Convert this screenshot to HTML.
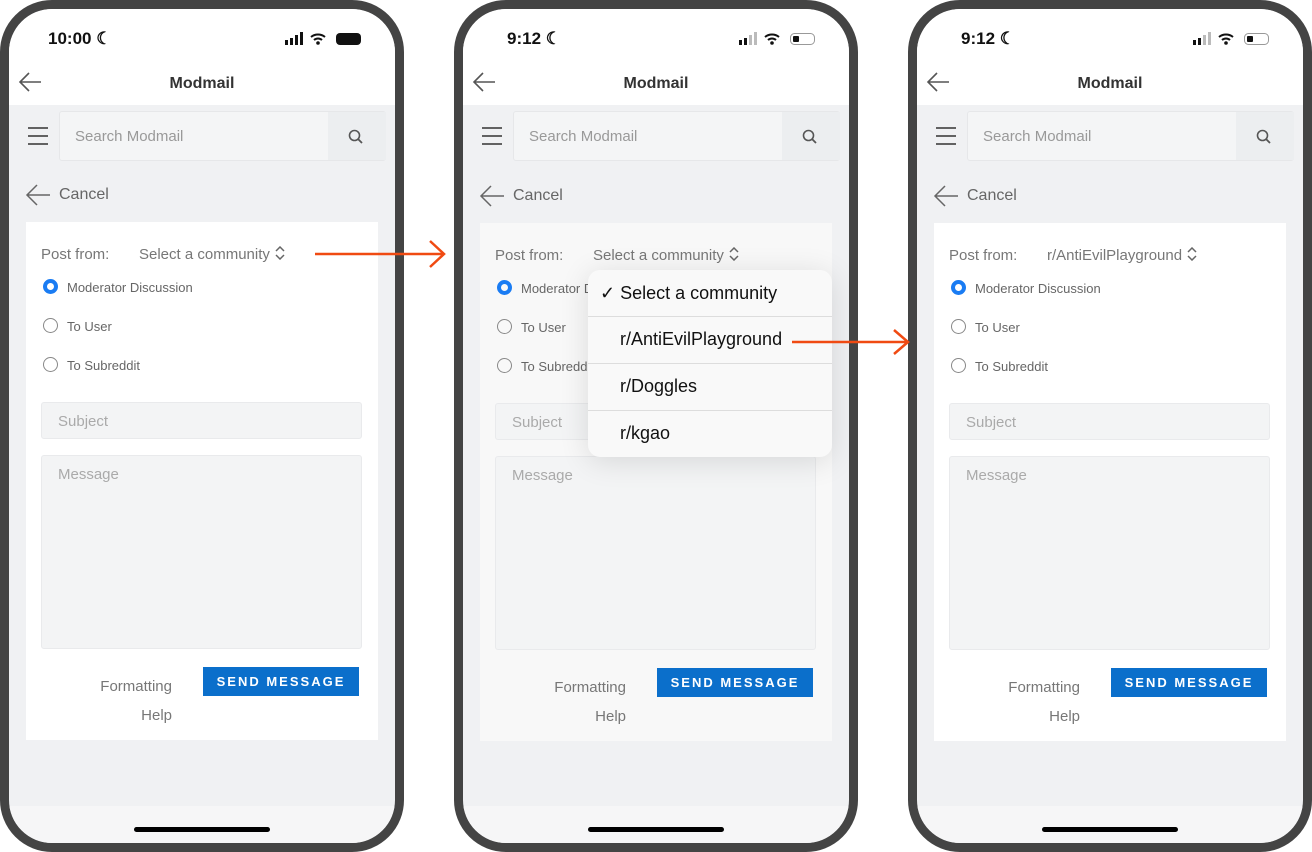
<!DOCTYPE html>
<html><head><meta charset="utf-8"><style>
*{margin:0;padding:0;box-sizing:border-box}
body{width:1312px;height:852px;background:#fff;position:relative;overflow:hidden;font-family:"Liberation Sans",sans-serif}
.ph{position:absolute;top:0;width:404px;height:852px;border:9px solid #444;border-radius:52px;background:#f0f1f3;overflow:hidden}
.a{position:absolute}
.top{left:0;top:0;width:386px;height:96px;background:#fff}
.time{top:20px;font-size:17px;font-weight:bold;color:#111}
.title{left:0;width:386px;top:66px;text-align:center;font-size:16px;font-weight:bold;color:#333}
.search{left:50px;top:102px;width:327px;height:50px;background:#f4f5f6;border:1px solid #e6e7e9;border-radius:3px}
.sbtn{left:268px;top:0;width:58px;height:48px;background:#eceef0}
.card{left:17px;width:352px;height:518px;background:#fff}
.lbl{font-size:15px;color:#777}
.rad{width:15px;height:15px;border-radius:50%;border:1.5px solid #888}
.rad.on{border:4px solid #1a7cf3}
.rt{font-size:13px;color:#666}
.inp{left:15px;width:321px;background:#f3f4f5;border:1px solid #e9eaec;border-radius:3px;font-size:15px;color:#aaa;padding:10px 16px}
.btn{width:156px;height:29px;background:#0b6fcb;color:#fff;font-size:13px;font-weight:bold;letter-spacing:2px;text-align:center;line-height:29px}
.bot{left:0;top:797px;width:386px;height:50px;background:#f6f6f7}
.home{left:125px;top:818px;width:136px;height:5px;border-radius:3px;background:#000}
.fh{left:20px;top:450px;width:126px;text-align:right;line-height:29px}
.fh span{display:block}
.fh .h{padding-right:0}
.chev{display:inline-block;vertical-align:-1px;margin-left:4px}
</style></head><body>

<div class="ph" style="left:0">
 <div class="a top"></div>
 <div class="a time" style="left:39px">10:00 ☾</div>
 <svg class="a" style="left:275px;top:23px" width="80" height="14"><rect x="1" y="8" width="3" height="5" fill="#111"/><rect x="6" y="6" width="3" height="7" fill="#111"/><rect x="11" y="3" width="3" height="10" fill="#111"/><rect x="16" y="0" width="3" height="13" fill="#111"/><path d="M27 5a11 11 0 0 1 14 0M30 8a6 6 0 0 1 8 0" stroke="#111" stroke-width="2" fill="none"/><circle cx="34" cy="11" r="1.8" fill="#111"/><rect x="52" y="1" width="25" height="12" rx="4" fill="#111"/></svg>
 <svg class="a" style="left:8px;top:62px" width="26" height="22"><path d="M24 11H3M12 2 3 11l9 9" stroke="#555" stroke-width="1.6" fill="none"/></svg>
 <div class="a title">Modmail</div>
 <svg class="a" style="left:19px;top:118px" width="22" height="18"><path d="M0 1h20M0 9h20M0 17h20" stroke="#333" stroke-width="1.6"/></svg>
 <div class="a search"><span class="a" style="left:15px;top:16px;font-size:15px;color:#999">Search Modmail</span><div class="a sbtn"><svg class="a" style="left:20px;top:17px" width="16" height="16"><circle cx="6.5" cy="6.5" r="5" stroke="#555" stroke-width="1.6" fill="none"/><path d="M10 10l4 4" stroke="#555" stroke-width="1.8"/></svg></div></div>
 <svg class="a" style="left:16px;top:174px" width="26" height="24"><path d="M25 12H2M12 2 2 12l10 10" stroke="#666" stroke-width="1.5" fill="none"/></svg>
 <div class="a lbl" style="left:50px;top:177px;font-size:16px;color:#666">Cancel</div>
 <div class="a card" style="top:213px">
  <div class="a lbl" style="left:15px;top:24px">Post from:</div>
  <div class="a lbl" style="left:113px;top:24px">Select a community<svg class="chev" width="12" height="14"><path d="M2 5l4-4 4 4M2 9l4 4 4-4" stroke="#666" stroke-width="1.5" fill="none"/></svg></div>
  <div class="a rad on" style="left:17px;top:57px"></div><div class="a rt" style="left:41px;top:58px">Moderator Discussion</div>
  <div class="a rad" style="left:17px;top:96px"></div><div class="a rt" style="left:41px;top:97px">To User</div>
  <div class="a rad" style="left:17px;top:135px"></div><div class="a rt" style="left:41px;top:136px">To Subreddit</div>
  <div class="a inp" style="top:180px;height:37px">Subject</div>
  <div class="a inp" style="top:233px;height:194px">Message</div>
  <div class="a lbl fh">Formatting<br>Help</div>
  <div class="a btn" style="left:177px;top:445px">SEND MESSAGE</div>
 </div>
 <div class="a bot"></div><div class="a home"></div>
</div>

<div class="ph" style="left:454px">
 <div class="a top"></div>
 <div class="a time" style="left:44px">9:12 ☾</div>
 <svg class="a" style="left:275px;top:23px" width="80" height="14"><rect x="1" y="8" width="3" height="5" fill="#111"/><rect x="6" y="6" width="3" height="7" fill="#111"/><rect x="11" y="3" width="3" height="10" fill="#bbb"/><rect x="16" y="0" width="3" height="13" fill="#bbb"/><path d="M27 5a11 11 0 0 1 14 0M30 8a6 6 0 0 1 8 0" stroke="#111" stroke-width="2" fill="none"/><circle cx="34" cy="11" r="1.8" fill="#111"/><rect x="52.5" y="1.5" width="24" height="11" rx="4" fill="none" stroke="#999"/><rect x="55" y="4" width="6" height="6" rx="1" fill="#111"/></svg>
 <svg class="a" style="left:8px;top:62px" width="26" height="22"><path d="M24 11H3M12 2 3 11l9 9" stroke="#555" stroke-width="1.6" fill="none"/></svg>
 <div class="a title">Modmail</div>
 <svg class="a" style="left:19px;top:118px" width="22" height="18"><path d="M0 1h20M0 9h20M0 17h20" stroke="#333" stroke-width="1.6"/></svg>
 <div class="a search"><span class="a" style="left:15px;top:16px;font-size:15px;color:#999">Search Modmail</span><div class="a sbtn"><svg class="a" style="left:20px;top:17px" width="16" height="16"><circle cx="6.5" cy="6.5" r="5" stroke="#555" stroke-width="1.6" fill="none"/><path d="M10 10l4 4" stroke="#555" stroke-width="1.8"/></svg></div></div>
 <svg class="a" style="left:16px;top:175px" width="26" height="24"><path d="M25 12H2M12 2 2 12l10 10" stroke="#666" stroke-width="1.5" fill="none"/></svg>
 <div class="a lbl" style="left:50px;top:178px;font-size:16px;color:#666">Cancel</div>
 <div class="a card" style="top:214px;background:#f8f8f8">
  <div class="a lbl" style="left:15px;top:24px">Post from:</div>
  <div class="a lbl" style="left:113px;top:24px">Select a community<svg class="chev" width="12" height="14"><path d="M2 5l4-4 4 4M2 9l4 4 4-4" stroke="#666" stroke-width="1.5" fill="none"/></svg></div>
  <div class="a rad on" style="left:17px;top:57px"></div><div class="a rt" style="left:41px;top:58px">Moderator Discussion</div>
  <div class="a rad" style="left:17px;top:96px"></div><div class="a rt" style="left:41px;top:97px">To User</div>
  <div class="a rad" style="left:17px;top:135px"></div><div class="a rt" style="left:41px;top:136px">To Subreddit</div>
  <div class="a inp" style="top:180px;height:37px">Subject</div>
  <div class="a inp" style="top:233px;height:194px">Message</div>
  <div class="a lbl fh">Formatting<br>Help</div>
  <div class="a btn" style="left:177px;top:445px">SEND MESSAGE</div>
 </div>
 <div class="a" style="left:125px;top:261px;width:244px;height:187px;background:#f9f9f9;border-radius:12px;box-shadow:0 4px 30px rgba(0,0,0,.12);font-size:18px;color:#111">
  <div style="height:47px;line-height:47px;padding-left:12px;border-bottom:1px solid #ddd">✓ Select a community</div>
  <div style="height:47px;line-height:45px;padding-left:32px;border-bottom:1px solid #ddd">r/AntiEvilPlayground</div>
  <div style="height:47px;line-height:45px;padding-left:32px;border-bottom:1px solid #ddd">r/Doggles</div>
  <div style="height:46px;line-height:44px;padding-left:32px">r/kgao</div>
 </div>
 <div class="a bot"></div><div class="a home"></div>
</div>

<div class="ph" style="left:908px">
 <div class="a top"></div>
 <div class="a time" style="left:44px">9:12 ☾</div>
 <svg class="a" style="left:275px;top:23px" width="80" height="14"><rect x="1" y="8" width="3" height="5" fill="#111"/><rect x="6" y="6" width="3" height="7" fill="#111"/><rect x="11" y="3" width="3" height="10" fill="#bbb"/><rect x="16" y="0" width="3" height="13" fill="#bbb"/><path d="M27 5a11 11 0 0 1 14 0M30 8a6 6 0 0 1 8 0" stroke="#111" stroke-width="2" fill="none"/><circle cx="34" cy="11" r="1.8" fill="#111"/><rect x="52.5" y="1.5" width="24" height="11" rx="4" fill="none" stroke="#999"/><rect x="55" y="4" width="6" height="6" rx="1" fill="#111"/></svg>
 <svg class="a" style="left:8px;top:62px" width="26" height="22"><path d="M24 11H3M12 2 3 11l9 9" stroke="#555" stroke-width="1.6" fill="none"/></svg>
 <div class="a title">Modmail</div>
 <svg class="a" style="left:19px;top:118px" width="22" height="18"><path d="M0 1h20M0 9h20M0 17h20" stroke="#333" stroke-width="1.6"/></svg>
 <div class="a search"><span class="a" style="left:15px;top:16px;font-size:15px;color:#999">Search Modmail</span><div class="a sbtn"><svg class="a" style="left:20px;top:17px" width="16" height="16"><circle cx="6.5" cy="6.5" r="5" stroke="#555" stroke-width="1.6" fill="none"/><path d="M10 10l4 4" stroke="#555" stroke-width="1.8"/></svg></div></div>
 <svg class="a" style="left:16px;top:175px" width="26" height="24"><path d="M25 12H2M12 2 2 12l10 10" stroke="#666" stroke-width="1.5" fill="none"/></svg>
 <div class="a lbl" style="left:50px;top:178px;font-size:16px;color:#666">Cancel</div>
 <div class="a card" style="top:214px">
  <div class="a lbl" style="left:15px;top:24px">Post from:</div>
  <div class="a lbl" style="left:113px;top:24px">r/AntiEvilPlayground<svg class="chev" width="12" height="14"><path d="M2 5l4-4 4 4M2 9l4 4 4-4" stroke="#666" stroke-width="1.5" fill="none"/></svg></div>
  <div class="a rad on" style="left:17px;top:57px"></div><div class="a rt" style="left:41px;top:58px">Moderator Discussion</div>
  <div class="a rad" style="left:17px;top:96px"></div><div class="a rt" style="left:41px;top:97px">To User</div>
  <div class="a rad" style="left:17px;top:135px"></div><div class="a rt" style="left:41px;top:136px">To Subreddit</div>
  <div class="a inp" style="top:180px;height:37px">Subject</div>
  <div class="a inp" style="top:233px;height:194px">Message</div>
  <div class="a lbl fh">Formatting<br>Help</div>
  <div class="a btn" style="left:177px;top:445px">SEND MESSAGE</div>
 </div>
 <div class="a bot"></div><div class="a home"></div>
</div>

<svg class="a" style="left:0;top:0" width="1312" height="852">
 <path d="M315 254H444M430 241l14 13-14 13" stroke="#f04a12" stroke-width="2.5" fill="none"/>
 <path d="M792 342H908M894 330l14 12-14 12" stroke="#f04a12" stroke-width="2.5" fill="none"/>
</svg>
</body></html>
